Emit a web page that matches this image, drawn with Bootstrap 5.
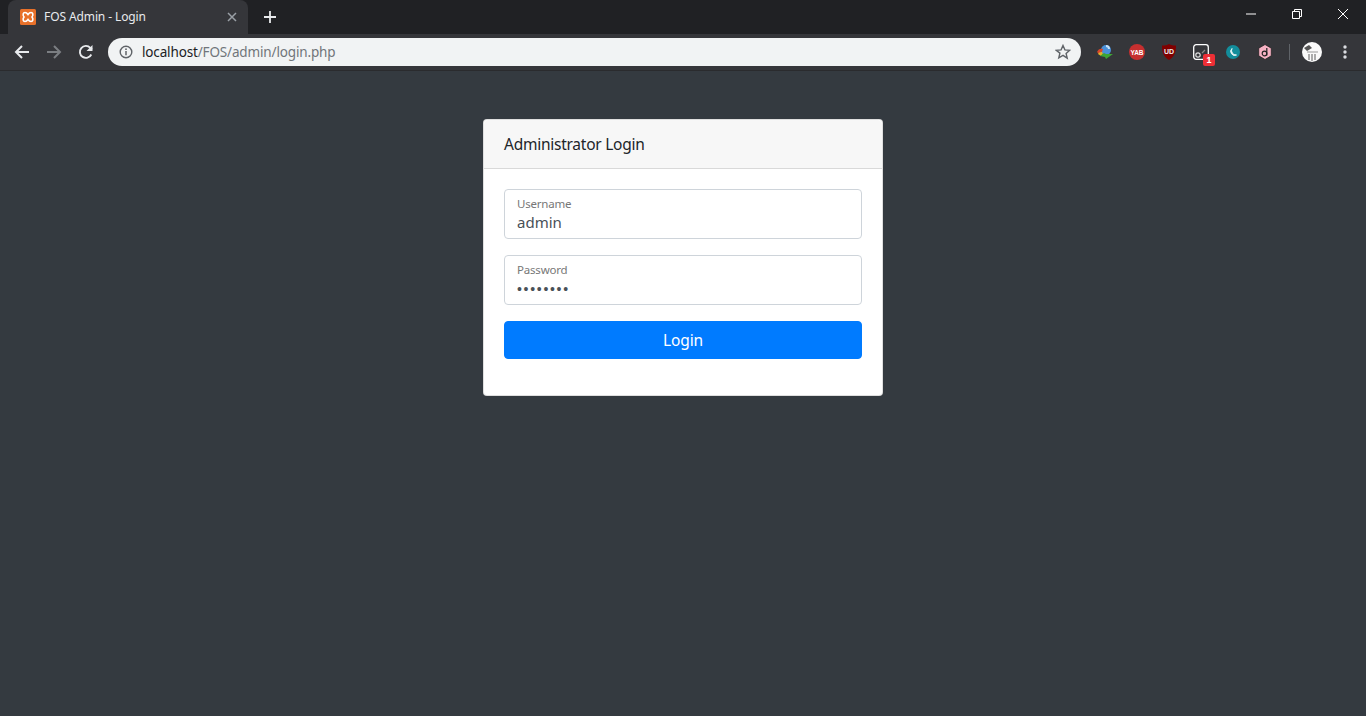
<!DOCTYPE html>
<html lang="en">
<head>
<meta charset="utf-8">
<title>FOS Admin - Login</title>
<link href="https://cdn.jsdelivr.net/npm/bootstrap@5.3.0/dist/css/bootstrap.min.css" rel="stylesheet">
<style>
html,body{height:100%;margin:0}
body{background:#343a40;font-family:"Noto Sans","Open Sans","Liberation Sans",sans-serif;overflow:hidden;display:flex;flex-direction:column}
.tabstrip{height:34px;background:#202124;padding-left:8px;flex:none}
.brtab{width:240px;height:34px;background:#35363a;border-radius:8px 8px 0 0;color:#e8eaed;font-size:12px;padding:0 11px 0 12px}
.brtab .ttl{letter-spacing:-.1px}
.newtab{margin-left:16px}
.winbtns{margin-left:auto;width:120px;padding:9px 18px 0 0}
.toolbar{height:37px;background:#35363a;border-bottom:1px solid #2a2b2e;flex:none;padding:0 0 0 14px}
.omni{width:973px;height:28px;border-radius:14px;background:#f1f3f4;margin-left:14px;padding:0 10px 0 11px;font-size:13.500px;letter-spacing:-.15px;flex:none}
.omni .hst{color:#202124;margin-left:9px}
.omni .pth{color:#70757a}
.exts{margin-left:8px;width:266px;gap:0}
.extc{width:32px;display:flex;justify-content:center;position:relative;flex:none}
.sep{width:1px;height:16px;background:#5f6368;margin:0 12px 0 8px;flex:none}
.cnt{position:absolute;left:18px;top:10px;width:12px;height:12px;background:#ee2f36;border-radius:2px;color:#fff;font:700 9px/12px "Liberation Sans",sans-serif;text-align:center}
.fwd{margin-left:16px}
.avt{width:20px}
.dots{width:22px;margin-left:12px}
.logincard{width:400px;margin:48px auto 0;border-radius:4px;overflow:hidden;border:1px solid rgba(0,0,0,.125);background:#fff}
.logincard .card-header{height:49px;padding:1px 20px 0;background:#f7f7f7;font-size:15.500px;color:#212529;display:flex;align-items:center;border-bottom:1px solid #d9d9d9;letter-spacing:-.25px}
.logincard .card-body{padding:20px 20px 36px}
.fld{height:50px;border:1px solid #ced4da;border-radius:4px;padding:5px 12px 0;margin-bottom:16px}
.fld label{display:block;font-size:11.500px;line-height:17px;color:#777;margin:0;letter-spacing:-.2px}
.fld input{display:block;width:100%;border:0;outline:0;padding:0;font-size:15px;line-height:21px;height:21px;color:#495057;background:transparent}
.fld input[type=password]{font-family:"Liberation Sans",sans-serif;font-size:14px;letter-spacing:1.700px;padding-top:2px}
.btnlogin{height:38px;background:#007bff;border-color:#007bff;color:#fff;font-size:15.500px;padding:1px 0 0;border-radius:4px;letter-spacing:-.1px}
</style>
</head>
<body>
<div class="tabstrip d-flex align-items-end">
  <div class="brtab d-flex align-items-center">
    <svg width="16" height="16" viewBox="0 0 16 16" class="flex-none me-2"><rect width="16" height="16" rx="1.500" fill="#e8712a"/><path d="M5 3.500c-2 0-2.500 2.500-1 4.500-1.500 2-1 4.500 1 4.500 1.300 0 2.300-1 3-2 .7 1 1.700 2 3 2 2 0 2.500-2.500 1-4.500 1.500-2 1-4.500-1-4.500-1.300 0-2.300 1-3 2-.7-1-1.700-2-3-2z" fill="none" stroke="#fff" stroke-width="1.600"/></svg>
    <span class="ttl flex-grow-1">FOS Admin - Login</span>
    <svg width="10" height="10" viewBox="0 0 10 10"><path d="M1 1l8 8M9 1l-8 8" stroke="#9aa0a6" stroke-width="1.500"/></svg>
  </div>
  <svg class="newtab align-self-center" width="12" height="12" viewBox="0 0 12 12"><path d="M6 0v12M0 6h12" stroke="#e8eaed" stroke-width="1.800"/></svg>
  <div class="winbtns d-flex align-self-start justify-content-between">
    <svg width="10" height="10" viewBox="0 0 10 10"><path d="M0 5h10" stroke="#fff" stroke-width="1"/></svg>
    <svg width="10" height="10" viewBox="0 0 10 10"><path d="M.5 2.500h7v7h-7zM2.500 2.500v-2h7v7h-2" fill="none" stroke="#fff"/></svg>
    <svg width="10" height="10" viewBox="0 0 10 10"><path d="M0 0l10 10M10 0L0 10" stroke="#fff"/></svg>
  </div>
</div>
<div class="toolbar d-flex align-items-center">
  <svg width="16" height="16" viewBox="0 0 16 16" class="flex-none"><path d="M15 8H2M8 2L2 8l6 6" fill="none" stroke="#e8eaed" stroke-width="2"/></svg>
  <svg width="16" height="16" viewBox="0 0 16 16" class="flex-none fwd"><path d="M1 8h13M8 2l6 6-6 6" fill="none" stroke="#7b7e82" stroke-width="2"/></svg>
  <svg width="16" height="16" viewBox="0 0 16 16" class="flex-none fwd"><path d="M13.300 10.500A6 6 0 1 1 12.300 3.800L14 5.500" fill="none" stroke="#e8eaed" stroke-width="1.900"/><path d="M14.500 1v6h-6z" fill="#e8eaed"/></svg>
  <div class="omni d-flex align-items-center">
    <svg width="14" height="14" viewBox="0 0 14 14" class="flex-none"><circle cx="7" cy="7" r="5.800" fill="none" stroke="#5f6368" stroke-width="1.400"/><path d="M7 6v4.200" stroke="#5f6368" stroke-width="1.500"/><circle cx="7" cy="4.200" r=".9" fill="#5f6368"/></svg>
    <span class="hst">localhost</span><span class="pth">/FOS/admin/login.php</span>
    <svg width="16" height="16" viewBox="0 0 16 16" class="ms-auto"><path d="M8 1.500l1.900 4.400 4.800.4-3.600 3.200 1.100 4.700L8 11.300l-4.200 2.500 1.100-4.700L1.300 6.300l4.800-.4z" fill="none" stroke="#5f6368" stroke-width="1.400"/></svg>
  </div>
  <div class="exts d-flex align-items-center">
    <span class="extc"><svg width="18" height="16" viewBox="0 0 18 16"><circle cx="10" cy="6" r="5" fill="#4a90d9"/><path d="M10 2a3 3 0 0 1 3 3" stroke="#c8e0f4" stroke-width="2" fill="none"/><path d="M1 8c1-3 4-4 6-3l-1 3c-1 0-2 0-3 2z" fill="#d8462a"/><path d="M2 10c1-2 3-2 4-2l1 2-2 2z" fill="#e3b32c"/><path d="M4 12l4-3 2 1h7l-7 5-1-2z" fill="#3fa535"/></svg></span>
    <span class="extc"><svg width="16" height="16" viewBox="0 0 16 16"><circle cx="8" cy="8" r="8" fill="#c62f2f"/><text x="8" y="10.500" text-anchor="middle" font-family="Liberation Sans" font-size="6.500" font-weight="700" fill="#fff">YAB</text></svg></span>
    <span class="extc"><svg width="14" height="16" viewBox="0 0 14 16"><path d="M7 0c2 1 4 1.500 7 1.500 0 7-1.500 11-7 14.500C1.500 12.500 0 8.500 0 1.500 3 1.500 5 1 7 0z" fill="#800000"/><text x="7" y="10" text-anchor="middle" font-family="Liberation Sans" font-size="7" font-weight="700" fill="#eee">UD</text></svg></span>
    <span class="extc"><svg width="16" height="16" viewBox="0 0 16 16"><rect x=".7" y=".7" width="14.600" height="14.600" rx="2.500" fill="none" stroke="#fff" stroke-width="1.300"/><circle cx="5" cy="11" r="2.200" fill="none" stroke="#ddd" stroke-width="1.200"/><path d="M9 9l3-3" stroke="#888" stroke-width="1.200"/></svg><span class="cnt">1</span></span>
    <span class="extc"><svg width="14" height="14" viewBox="0 0 14 14"><circle cx="7" cy="7" r="7" fill="#138d9b"/><path d="M6 3.500a4 4 0 0 0 4.500 6.500A4.500 4.500 0 0 1 6 3.500z" fill="#e6f5f5" stroke="#e6f5f5"/></svg></span>
    <span class="extc"><svg width="14" height="16" viewBox="0 0 14 16"><path d="M7 .5l6.300 3.700v7.600L7 15.500.7 11.800V4.200z" fill="#f7b2c4" stroke="#222" stroke-width=".8"/><circle cx="6.500" cy="9.500" r="2.300" fill="none" stroke="#222" stroke-width="1.200"/><path d="M8.800 4v7.500" stroke="#222" stroke-width="1.200"/></svg></span>
    <span class="sep"></span>
    <span class="extc avt"><svg width="20" height="20" viewBox="0 0 20 20"><circle cx="10" cy="10" r="10" fill="#fafafa"/><path d="M2 6l5-3 3 3-5 3z" fill="#555"/><path d="M5 10h11" stroke="#999"/><path d="M7 12v6M10 12v7M13 12v6" stroke="#777" stroke-width="1.200"/></svg></span>
    <span class="extc dots"><svg width="4" height="14" viewBox="0 0 4 14"><circle cx="2" cy="2" r="1.700" fill="#dadce0"/><circle cx="2" cy="7" r="1.700" fill="#dadce0"/><circle cx="2" cy="12" r="1.700" fill="#dadce0"/></svg></span>
  </div>
</div>
<div class="card logincard">
  <div class="card-header">Administrator Login</div>
  <div class="card-body">
    <form>
      <div class="fld"><label for="u">Username</label><input id="u" type="text" value="admin"></div>
      <div class="fld"><label for="p">Password</label><input id="p" type="password" value="password"></div>
      <button type="button" class="btn btnlogin w-100">Login</button>
    </form>
  </div>
</div>
<script src="https://cdn.jsdelivr.net/npm/bootstrap@5.3.0/dist/js/bootstrap.bundle.min.js"></script>
</body>
</html>
